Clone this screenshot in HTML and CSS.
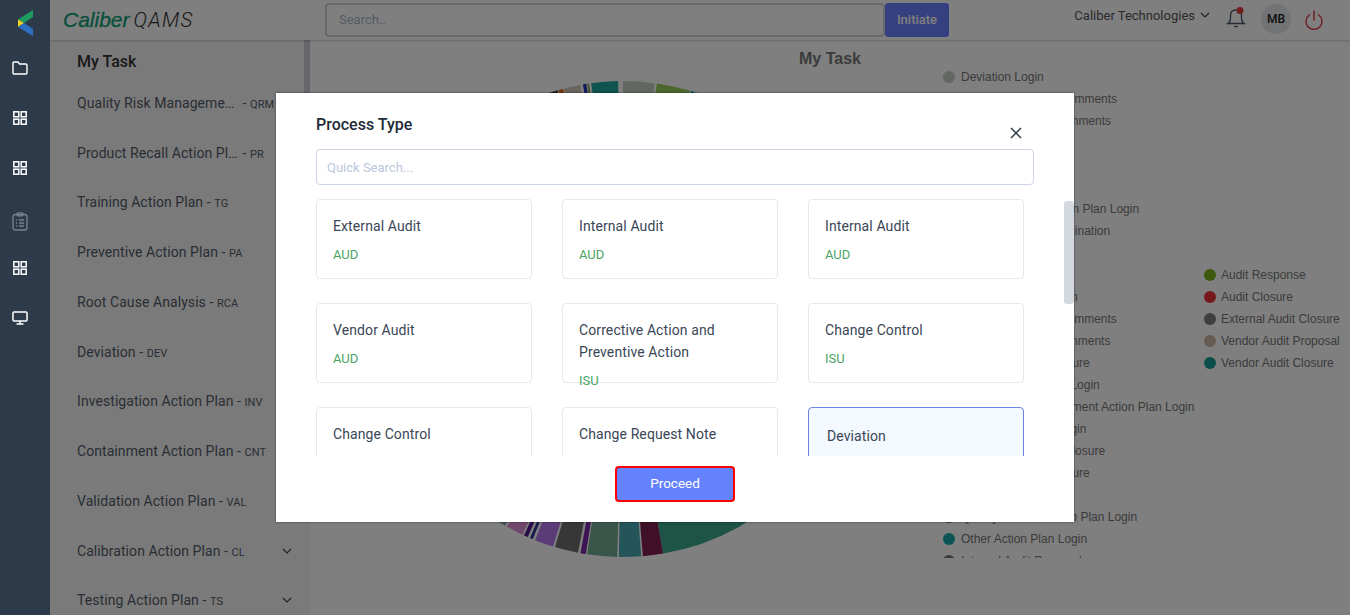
FILE: index.html
```html
<!DOCTYPE html>
<html lang="en">
<head>
<meta charset="utf-8">
<title>CaliberQAMS</title>
<link rel="stylesheet" href="styles.css">
</head>
<body>
<div class="app">
  <nav class="rail">
    <svg class="rail-logo" width="16" height="26" viewBox="0 0 16 26">
      <polygon points="15,0 15,7 6,13 0,9.500" fill="#1f9a5f"/>
      <polygon points="0,9.500 6,13 0,17" fill="#f3d21b"/>
      <polygon points="0,17 6,13 15,19 15,26" fill="#2d6fc0"/>
    </svg>
    <svg class="rail-icon" width="16" height="14" viewBox="0 0 16 14" fill="none" stroke="#fff" stroke-width="1.4"><path d="M1 2.200Q1 1 2.200 1H6L7.600 3H13.800Q15 3 15 4.200V11.800Q15 13 13.800 13H2.200Q1 13 1 11.800Z"/></svg>
    <svg class="rail-icon rail-grid" width="14" height="14" viewBox="0 0 14 14" fill="none" stroke="#fff" stroke-width="1.500"><rect x=".8" y=".8" width="5" height="5"/><rect x="8.200" y=".8" width="5" height="5"/><rect x=".8" y="8.200" width="5" height="5"/><rect x="8.200" y="8.200" width="5" height="5"/></svg>
    <svg class="rail-icon rail-grid" width="14" height="14" viewBox="0 0 14 14" fill="none" stroke="#fff" stroke-width="1.500"><rect x=".8" y=".8" width="5" height="5"/><rect x="8.200" y=".8" width="5" height="5"/><rect x=".8" y="8.200" width="5" height="5"/><rect x="8.200" y="8.200" width="5" height="5"/></svg>
    <svg class="rail-icon rail-clip" width="16" height="19" viewBox="0 0 16 19" fill="none" stroke="#78838f" stroke-width="1.300"><rect x="1" y="2.500" width="14" height="15.500" rx="2.500"/><rect x="5" y=".8" width="6" height="3" rx="1"/><path d="M4 8H5M7 8H12M4 11H5M7 11H12M4 14H5M7 14H12"/></svg>
    <svg class="rail-icon rail-grid" width="14" height="14" viewBox="0 0 14 14" fill="none" stroke="#fff" stroke-width="1.500"><rect x=".8" y=".8" width="5" height="5"/><rect x="8.200" y=".8" width="5" height="5"/><rect x=".8" y="8.200" width="5" height="5"/><rect x="8.200" y="8.200" width="5" height="5"/></svg>
    <svg class="rail-icon" width="16" height="14" viewBox="0 0 16 14" fill="none" stroke="#fff" stroke-width="1.500"><rect x="1" y="1" width="14" height="9" rx="1"/><path d="M8 10V13M4.500 13H11.500"/></svg>
  </nav>
  <div class="main">
    <header class="topbar">
      <div class="brand"><span class="brand-a">Caliber</span><span class="brand-b">QAMS</span></div>
      <div class="search">Search..</div>
      <div class="initiate">Initiate</div>
      <div class="top-right">
        <span class="org">Caliber Technologies</span>
        <svg class="org-chev" width="10" height="6" viewBox="0 0 10 6" fill="none" stroke="#444" stroke-width="1.200"><path d="M1 1L5 5L9 1"/></svg>
        <svg class="bell" width="20" height="22" viewBox="0 0 20 22" fill="none" stroke="#4a5866" stroke-width="1.300"><path d="M2 16.500Q4.500 15 4.500 11V8.500Q4.500 3 10 3Q15.500 3 15.500 8.500V11Q15.500 15 18 16.500Z"/><path d="M8 19.500H12"/><circle cx="14" cy="3.500" r="3.500" fill="#e23b3b" stroke="none"/></svg>
        <span class="avatar">MB</span>
        <svg class="power" width="18" height="20" viewBox="0 0 18 20" fill="none" stroke="#e0454a" stroke-width="1.500" stroke-linecap="round"><path d="M9 1V10"/><path d="M4.500 4.800A8 8 0 1 0 13.500 4.800"/></svg>
      </div>
    </header>
    <div class="content">
      <aside class="tasks">
        <h2 class="tasks-title">My Task</h2>
        <ul class="task-list">
          <li class="task"><span class="task-name clip">Quality Risk Management Action Plan</span><span class="task-code">&nbsp;- <small>QRM</small></span></li>
          <li class="task"><span class="task-name clip">Product Recall Action Plan Login</span><span class="task-code">&nbsp;- <small>PR</small></span></li>
          <li class="task"><span class="task-name">Training Action Plan</span><span class="task-code">&nbsp;- <small>TG</small></span></li>
          <li class="task"><span class="task-name">Preventive Action Plan</span><span class="task-code">&nbsp;- <small>PA</small></span></li>
          <li class="task"><span class="task-name">Root Cause Analysis</span><span class="task-code">&nbsp;- <small>RCA</small></span></li>
          <li class="task"><span class="task-name">Deviation</span><span class="task-code">&nbsp;- <small>DEV</small></span></li>
          <li class="task"><span class="task-name">Investigation Action Plan</span><span class="task-code">&nbsp;- <small>INV</small></span></li>
          <li class="task"><span class="task-name">Containment Action Plan</span><span class="task-code">&nbsp;- <small>CNT</small></span></li>
          <li class="task"><span class="task-name">Validation Action Plan</span><span class="task-code">&nbsp;- <small>VAL</small></span></li>
          <li class="task"><span class="task-name">Calibration Action Plan</span><span class="task-code">&nbsp;- <small>CL</small></span><svg class="task-chev" width="10" height="6" viewBox="0 0 10 6" fill="none" stroke="#444" stroke-width="1.200"><path d="M1 1L5 5L9 1"/></svg></li>
          <li class="task"><span class="task-name">Testing Action Plan</span><span class="task-code">&nbsp;- <small>TS</small></span><svg class="task-chev" width="10" height="6" viewBox="0 0 10 6" fill="none" stroke="#444" stroke-width="1.200"><path d="M1 1L5 5L9 1"/></svg></li>
        </ul>
        <div class="tasks-thumb"></div>
      </aside>
      <section class="chart">
        <h2 class="chart-title">My Task</h2>
        <div class="chart-row">
          <svg class="pie" width="476" height="476" viewBox="0 0 476 476">
            <g fill="none" stroke-width="238" transform="rotate(-90 238 238)">
              <circle cx="238" cy="238" r="119" pathLength="360" stroke="#3aa88c" stroke-dasharray="152.500 360" stroke-dashoffset="-17.800"/>
              <circle cx="238" cy="238" r="119" pathLength="360" stroke="#1f9e96" stroke-dasharray="1 360" stroke-dashoffset="-16.600"/>
              <circle cx="238" cy="238" r="119" pathLength="360" stroke="#9acc5a" stroke-dasharray="8.100 360" stroke-dashoffset="-8.200"/>
              <circle cx="238" cy="238" r="119" pathLength="360" stroke="#c4cfc4" stroke-dasharray="7.700 360" stroke-dashoffset="0"/>
              <circle cx="238" cy="238" r="119" pathLength="360" stroke="#1fa89c" stroke-dasharray="6.500 360" stroke-dashoffset="-352.300"/>
              <circle cx="238" cy="238" r="119" pathLength="360" stroke="#8fb05a" stroke-dasharray=".5 360" stroke-dashoffset="-351.300"/>
              <circle cx="238" cy="238" r="119" pathLength="360" stroke="#2438b8" stroke-dasharray=".8 360" stroke-dashoffset="-350.300"/>
              <circle cx="238" cy="238" r="119" pathLength="360" stroke="#d4c8be" stroke-dasharray="4 360" stroke-dashoffset="-345.600"/>
              <circle cx="238" cy="238" r="119" pathLength="360" stroke="#e07020" stroke-dasharray="1.200 360" stroke-dashoffset="-344.200"/>
              <circle cx="238" cy="238" r="119" pathLength="360" stroke="#3a3a3a" stroke-dasharray="22 360" stroke-dashoffset="-322"/>
              <circle cx="238" cy="238" r="119" pathLength="360" stroke="#7e2050" stroke-dasharray="4.900 360" stroke-dashoffset="-170.300"/>
              <circle cx="238" cy="238" r="119" pathLength="360" stroke="#48aab4" stroke-dasharray="5.400 360" stroke-dashoffset="-175.600"/>
              <circle cx="238" cy="238" r="119" pathLength="360" stroke="#74ac94" stroke-dasharray="7.300 360" stroke-dashoffset="-181.400"/>
              <circle cx="238" cy="238" r="119" pathLength="360" stroke="#7a2aa8" stroke-dasharray="1.300 360" stroke-dashoffset="-189"/>
              <circle cx="238" cy="238" r="119" pathLength="360" stroke="#6e6e6e" stroke-dasharray="5.700 360" stroke-dashoffset="-190.900"/>
              <circle cx="238" cy="238" r="119" pathLength="360" stroke="#b878f0" stroke-dasharray="4.600 360" stroke-dashoffset="-197.100"/>
              <circle cx="238" cy="238" r="119" pathLength="360" stroke="#2c3a9c" stroke-dasharray=".7 360" stroke-dashoffset="-202.300"/>
              <circle cx="238" cy="238" r="119" pathLength="360" stroke="#501a90" stroke-dasharray="1 360" stroke-dashoffset="-203.600"/>
              <circle cx="238" cy="238" r="119" pathLength="360" stroke="#e090d8" stroke-dasharray="4.200 360" stroke-dashoffset="-205"/>
              <circle cx="238" cy="238" r="119" pathLength="360" stroke="#88a8b0" stroke-dasharray="2 360" stroke-dashoffset="-209.700"/>
            </g>
          </svg>
          <ul class="legend legend-main">
            <li><i class="dot" style="background:#c4cfc4"></i>Deviation Login</li>
            <li><i class="dot"></i>Deviation Closure Comments</li>
            <li><i class="dot"></i>Deviation Owner Comments</li>
            <li><i class="dot"></i>Deviation Closure</li>
            <li><i class="dot"></i>CAPA Login</li>
            <li><i class="dot"></i>CAPA Closure</li>
            <li><i class="dot"></i>Implementation Action Plan Login</li>
            <li><i class="dot"></i>Change Control Termination</li>
            <li><i class="dot"></i>Risk Login</li>
            <li><i class="dot"></i>Risk Closure</li>
            <li><i class="dot"></i>Change Control Login</li>
            <li><i class="dot"></i>Validation Review Comments</li>
            <li><i class="dot"></i>Deviation Author Comments</li>
            <li><i class="dot"></i>Change Control Closure</li>
            <li><i class="dot"></i>Root Cause Review Login</li>
            <li><i class="dot"></i>Quality Risk Management Action Plan Login</li>
            <li><i class="dot"></i>Preventive Action Login</li>
            <li><i class="dot"></i>Investigation Head Closure</li>
            <li><i class="dot"></i>Change Record Closure</li>
            <li><i class="dot"></i>Audit Login</li>
            <li><i class="dot" style="background:#666"></i>Quality Review Action Plan Login</li>
            <li><i class="dot" style="background:#18a8b0"></i>Other Action Plan Login</li>
            <li><i class="dot" style="background:#777"></i>Internal Audit Proposal</li>
          </ul>
          <ul class="legend legend-side">
            <li><i class="dot" style="background:#76b420"></i>Audit Response</li>
            <li><i class="dot" style="background:#ee3338"></i>Audit Closure</li>
            <li><i class="dot" style="background:#7e7e7e"></i>External Audit Closure</li>
            <li><i class="dot" style="background:#ccb4a2"></i>Vendor Audit Proposal</li>
            <li><i class="dot" style="background:#1a9c98"></i>Vendor Audit Closure</li>
          </ul>
        </div>
      </section>
    </div>
  </div>
  <div class="backdrop"></div>
  <div class="modal">
    <h3 class="modal-title">Process Type</h3>
    <svg class="modal-close" width="12" height="12" viewBox="0 0 12 12" stroke="#2c3a4c" stroke-width="1.500" fill="none"><path d="M1 1L11 11M11 1L1 11"/></svg>
    <div class="quick">Quick Search...</div>
    <div class="cards">
      <div class="card"><div class="card-name">External Audit</div><div class="card-code">AUD</div></div>
      <div class="card"><div class="card-name">Internal Audit</div><div class="card-code">AUD</div></div>
      <div class="card"><div class="card-name">Internal Audit</div><div class="card-code">AUD</div></div>
      <div class="card"><div class="card-name">Vendor Audit</div><div class="card-code">AUD</div></div>
      <div class="card"><div class="card-name">Corrective Action and Preventive Action</div><div class="card-code">ISU</div></div>
      <div class="card"><div class="card-name">Change Control</div><div class="card-code">ISU</div></div>
      <div class="card"><div class="card-name">Change Control</div><div class="card-code">ISU</div></div>
      <div class="card"><div class="card-name">Change Request Note</div><div class="card-code">ISU</div></div>
      <div class="card card-selected"><div class="card-name">Deviation</div><div class="card-code">ISU</div></div>
    </div>
    <div class="modal-foot"><div class="proceed">Proceed</div></div>
    <div class="modal-thumb"></div>
  </div>
</div>
</body>
</html>
```
FILE: styles.css
```css
* { box-sizing: border-box; }
html, body { margin: 0; height: 100%; overflow: hidden; }
body { font-family: Roboto, "Liberation Sans", sans-serif; background: #fff; }
ul { list-style: none; margin: 0; padding: 0; }
h2, h3 { margin: 0; }
.app { display: flex; height: 615px; position: relative; overflow: hidden; }

.rail { width: 50px; flex: none; background: #2c3a4a; position: relative; z-index: 3; display: flex; flex-direction: column; align-items: flex-start; padding-left: 12px; }
.rail-logo { margin: 10px 0 25px 6px; }
.rail-icon { display: block; margin-bottom: 36px; }
.rail-grid { margin-left: 1px; }
.rail-clip { margin-top: 1px; margin-bottom: 30px; }

.main { flex: 1; display: flex; flex-direction: column; min-width: 0; }
.topbar { height: 40px; flex: none; display: flex; align-items: center; background: #fff; box-shadow: 0 1px 2px rgba(0,0,0,.2); position: relative; z-index: 1; }
.brand { width: 275px; padding-left: 13px; font-style: italic; white-space: nowrap; display: flex; align-items: baseline; }
.brand-a { font-family: "Liberation Sans", sans-serif; font-size: 21px; color: #0fa077; -webkit-text-stroke: .3px #0fa077; }
.brand-b { font-family: Roboto, sans-serif; font-weight: 300; font-size: 20.500px; color: #333; letter-spacing: 1.300px; margin-left: 4px; }
.search { width: 560px; height: 34px; border: 2px solid #ccd2dc; border-radius: 4px; padding: 0 12px; line-height: 30px; font-size: 13px; color: #aab6c8; }
.initiate { width: 64px; height: 34px; background: #6880ff; border-radius: 3px; color: #fff; font-size: 13px; font-weight: 500; text-align: center; line-height: 34px; }
.top-right { margin-left: auto; display: flex; align-items: center; height: 40px; padding-right: 27px; }
.org { font-size: 13px; color: #555; margin-top: -10px; }
.org-chev { margin: -10px 0 0 5px; }
.bell { margin-left: 16px; margin-top: -4px; }
.avatar { width: 30px; height: 30px; border-radius: 50%; background: #e4e6ea; color: #222; font-size: 12px; font-weight: 500; text-align: center; line-height: 30px; margin-left: 15px; margin-top: -2px; }
.power { margin-left: 14px; }

.content { flex: 1; display: flex; min-height: 0; }
.tasks { width: 260px; flex: none; background: #f5f5f5; padding: 12px 0 0 27px; position: relative; overflow: hidden; }
.tasks-title { font-size: 16px; font-weight: 500; color: #333; line-height: 19px; margin-bottom: 7px; }
.task { height: 49.750px; display: flex; align-items: center; font-size: 14px; color: #525c6a; letter-spacing: .07px; padding-right: 18px; white-space: nowrap; }
.task-name.clip { width: 162px; overflow: hidden; text-overflow: ellipsis; flex: none; }
.task-code { flex: none; }
.task-code small { font-size: 11px; }
.task-chev { margin-left: auto; }
.tasks-thumb { position: absolute; right: 0; top: 0; width: 6px; height: 200px; background: #c8ccd2; }

.chart { flex: 1; min-width: 0; position: relative; }
.chart-title { text-align: center; font-family: "Liberation Sans", sans-serif; font-size: 16px; font-weight: 700; color: #777; line-height: 18px; margin-top: 10px; height: 18px; }
.chart-row { display: flex; align-items: flex-start; margin-top: -2px; }
.pie { flex: none; margin: 15px 0 0 75px; }
.legend { font-family: "Liberation Sans", sans-serif; font-size: 12px; color: #777; }
.legend li { height: 22px; display: flex; align-items: center; white-space: nowrap; }
.dot { width: 12px; height: 12px; border-radius: 50%; background: #888; flex: none; margin-right: 6px; }
.legend-main { width: 261px; height: 492px; margin-left: 82px; overflow: hidden; }
.legend-side { margin-top: 198px; }
.legend-side .dot { margin-right: 5px; }

.backdrop { position: absolute; left: 50px; top: 0; right: 0; bottom: 0; background: rgba(0,0,0,.5); z-index: 2; }

.modal { position: absolute; left: 276px; top: 93px; width: 798px; height: 429px; background: #fff; z-index: 4; padding: 22px 40px 0; box-shadow: 0 0 2px rgba(0,0,0,.5); }
.modal-title { font-size: 16px; font-weight: 500; color: #212a36; line-height: 19px; }
.modal-close { position: absolute; right: 52px; top: 34px; }
.quick { width: 718px; height: 36px; margin-top: 15px; border: 1px solid #ccd5e6; border-radius: 4px; padding: 0 10px; line-height: 36px; font-size: 13px; color: #bcc6dc; }
.cards { display: grid; grid-template-columns: repeat(3, 216px); gap: 24px 30px; height: 257px; margin-top: 14px; overflow: hidden; }
.card { height: 80px; border: 1px solid #e8e8ec; border-radius: 4px; padding: 15px 16px 16px; }
.card-name { font-size: 14px; line-height: 22px; color: #3a4656; letter-spacing: .1px; }
.card-code { font-size: 13px; line-height: 14px; color: #4aa564; margin-top: 11px; }
.card-selected { background: #f4f8ff; border-color: #6a82e8; padding: 17px 18px; }
.modal-foot { display: flex; justify-content: center; margin-top: 10px; }
.proceed { width: 120px; height: 36px; background: #6582fd; border: 2px solid #f00; border-radius: 4px; color: #fff; font-size: 13.500px; font-weight: 400; text-align: center; line-height: 30px; }
.modal-thumb { position: absolute; right: 0; top: 108px; width: 10px; height: 103px; background: #d3d9df; border-radius: 3px; }
```
